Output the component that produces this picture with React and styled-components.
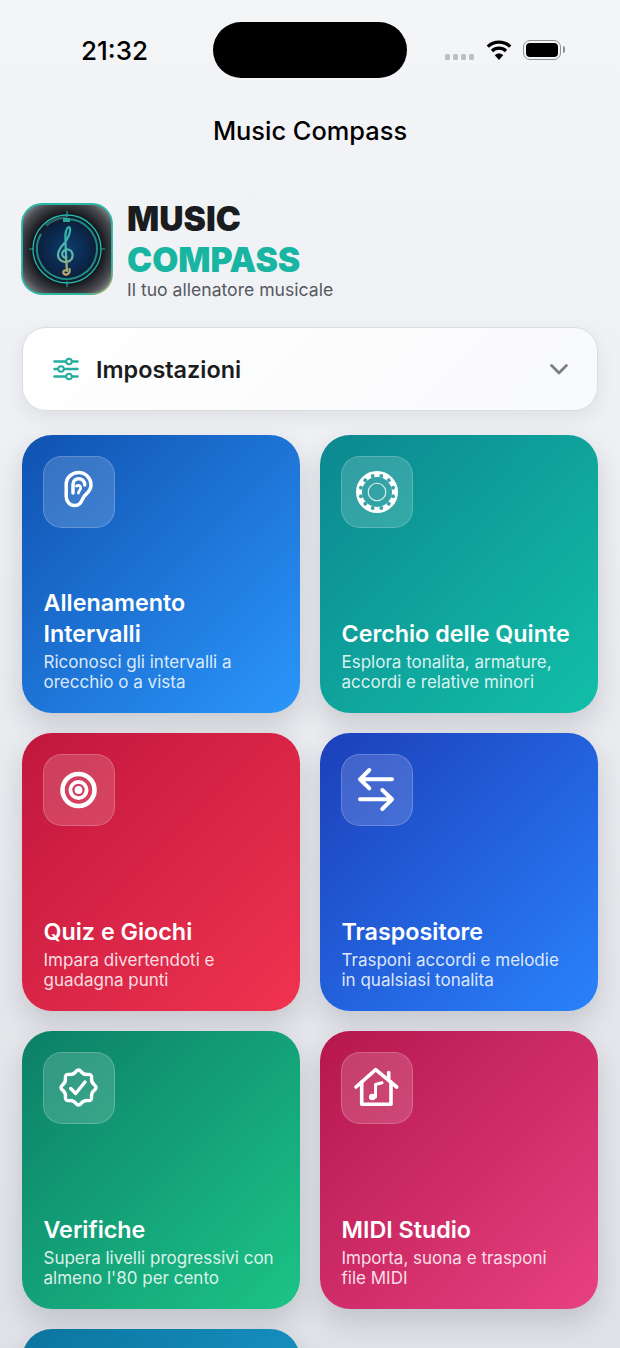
import React from "react";
import styled, { createGlobalStyle } from "styled-components";

const GlobalStyle = createGlobalStyle`
  html, body {
    margin: 0;
    padding: 0;
    height: 1348px;
    overflow: hidden;
  }
  body {
    font-family: Inter, "Liberation Sans", sans-serif;
    -webkit-font-smoothing: antialiased;
  }
`;

//Icons are all drawn on the same 72 grid as their tile
const TileSvg = ({ children }) => (
  <svg
    width="72"
    height="72"
    viewBox="0 0 72 72"
    fill="none"
    stroke="#fff"
    strokeLinecap="round"
    strokeLinejoin="round"
  >
    {children}
  </svg>
);

const EarIcon = () => (
  <TileSvg>
    <g transform="translate(22 15.5)" strokeWidth="3.5">
      <path d="M1.2 13C1.2 6 7 1 13.5 1C20.8 1 26 7 26 13.5C26 19 22.3 21.5 19.8 24C17 26.8 16.8 34 9.5 34C4.8 34 1.2 30 1.2 25Z" />
      <path d="M8 21.5V13.2C8 9.5 10.5 7.2 13.6 7.2C17.2 7.2 19.8 10 19.8 13.5" />
      <path d="M11.5 14.5C13.8 13.2 16.2 14.5 15.6 17C15.2 18.6 13.8 19.2 13.4 21.5" strokeWidth="2.8" />
    </g>
  </TileSvg>
);

const fifthsDots = Array.from({ length: 12 }, (_, i) => {
  const a = ((i * 30 + 15) * Math.PI) / 180;
  return { x: 36 + 16.6 * Math.sin(a), y: 36 - 16.6 * Math.cos(a) };
});

const FifthsIcon = () => (
  <TileSvg>
    <circle cx="36" cy="36" r="18" strokeWidth="6" />
    {fifthsDots.map((d, i) => (
      <circle key={i} cx={d.x} cy={d.y} r="2" fill="#3da4a6" stroke="none" />
    ))}
    <circle cx="36" cy="36" r="8.8" strokeWidth="1.1" opacity="0.85" />
  </TileSvg>
);

const TargetIcon = () => (
  <TileSvg>
    <circle cx="35.5" cy="36" r="16" strokeWidth="4.6" />
    <circle cx="35.5" cy="36" r="8.1" strokeWidth="3.8" />
    <circle cx="35.5" cy="36" r="3.9" fill="#fff" stroke="none" />
  </TileSvg>
);

const SwapIcon = () => (
  <TileSvg>
    <g strokeWidth="4">
      <path d="M51 25.3H19M28.3 16L19 25.3L28.3 34.3" />
      <path d="M19 45.3H51M41.3 36L51 45.3L41.3 55" />
    </g>
  </TileSvg>
);

//Wavy eight point seal, a closed quadratic spline through the star's corners
const sealPoints = Array.from({ length: 16 }, (_, i) => {
  const r = i % 2 === 0 ? 19.2 : 13.6;
  const a = (i * 22.5 * Math.PI) / 180;
  return [35.5 + r * Math.sin(a), 35.5 - r * Math.cos(a)];
});
const sealMid = (p, q) => [(p[0] + q[0]) / 2, (p[1] + q[1]) / 2];
const sealStart = sealMid(sealPoints[15], sealPoints[0]);
const sealPath =
  `M${sealStart[0].toFixed(2)} ${sealStart[1].toFixed(2)}` +
  sealPoints
    .map((p, i) => {
      const m = sealMid(p, sealPoints[(i + 1) % 16]);
      return `Q${p[0].toFixed(2)} ${p[1].toFixed(2)} ${m[0].toFixed(2)} ${m[1].toFixed(2)}`;
    })
    .join("") +
  "Z";

const SealIcon = () => (
  <TileSvg>
    <path d={sealPath} strokeWidth="3.4" />
    <path d="M27.7 36.5L32.7 41.5L42 30" strokeWidth="3.4" />
  </TileSvg>
);

const HouseIcon = () => (
  <TileSvg>
    <g strokeWidth="3.6">
      <path d="M15 35L34.7 17.7L55.7 35" />
      <path d="M20.7 30V52.3H50V30" />
      <path d="M47.7 20.5V27" />
      <path d="M34.5 45V32.5L41 30.8" strokeWidth="3" />
    </g>
    <circle cx="31.3" cy="45" r="3.3" fill="#fff" stroke="none" />
  </TileSvg>
);

const cards = [
  {
    title: "Allenamento Intervalli",
    text: "Riconosci gli intervalli a orecchio o a vista",
    from: "#1052b0",
    to: "#2b96fb",
    Icon: EarIcon,
  },
  {
    title: "Cerchio delle Quinte",
    text: "Esplora tonalita, armature, accordi e relative minori",
    from: "#0c8790",
    to: "#12bfa8",
    Icon: FifthsIcon,
  },
  {
    title: "Quiz e Giochi",
    text: "Impara divertendoti e guadagna punti",
    from: "#c1173d",
    to: "#f03350",
    Icon: TargetIcon,
  },
  {
    title: "Traspositore",
    text: "Trasponi accordi e melodie in qualsiasi tonalita",
    from: "#1c3fba",
    to: "#2a82fc",
    Icon: SwapIcon,
  },
  {
    title: "Verifiche",
    text: "Supera livelli progressivi con almeno l'80 per cento",
    from: "#0c7f68",
    to: "#1cc487",
    Icon: SealIcon,
  },
  {
    title: "MIDI Studio",
    text: "Importa, suona e trasponi file MIDI",
    from: "#b5174c",
    to: "#e84181",
    Icon: HouseIcon,
  },
];

const App = () => {
  return (
    <Page>
      <GlobalStyle />
      <StatusBar>
        <Clock>21:32</Clock>
        <Island />
        <StatusIcons>
          <SignalDots>
            <i />
            <i />
            <i />
            <i />
          </SignalDots>
          <svg width="26" height="22" viewBox="0 0 26 22" fill="none" stroke="#000">
            <path d="M1.8 7.6C8 1.6 18 1.6 24.2 7.6" strokeWidth="3.4" />
            <path d="M6 12C10 8.2 16 8.2 20 12" strokeWidth="3.4" />
            <path d="M13 21L8.8 16.3C11 14 15 14 17.2 16.3Z" fill="#000" stroke="none" />
          </svg>
          <Battery>
            <BatteryFill />
            <BatteryNub />
          </Battery>
        </StatusIcons>
      </StatusBar>

      <NavTitle>Music Compass</NavTitle>

      <Content>
        <Hero>
          <Logo />
          <HeroText>
            <BrandLine>MUSIC</BrandLine>
            <BrandLine $accent>COMPASS</BrandLine>
            <Tagline>Il tuo allenatore musicale</Tagline>
          </HeroText>
        </Hero>

        <Settings>
          <svg width="26" height="24" viewBox="0 0 26 24" fill="none" stroke="#24ad9f" strokeWidth="2.6" strokeLinecap="round">
            <path d="M1.5 4.5H24.5M1.5 12H24.5M1.5 19.5H24.5" />
            <g fill="#fff" strokeWidth="2">
              <circle cx="16" cy="4.5" r="2.8" />
              <circle cx="8" cy="12" r="2.8" />
              <circle cx="16" cy="19.5" r="2.8" />
            </g>
          </svg>
          <SettingsLabel>Impostazioni</SettingsLabel>
          <svg width="18" height="11" viewBox="0 0 18 11" fill="none" stroke="#7d7f85" strokeWidth="2.8" strokeLinecap="round" strokeLinejoin="round">
            <path d="M1.6 1.6L9 9L16.4 1.6" />
          </svg>
        </Settings>

        <Grid>
          {cards.map(({ title, text, from, to, Icon }) => (
            <Card key={title} $from={from} $to={to}>
              <IconTile>
                <Icon />
              </IconTile>
              <div>
                <CardTitle>{title}</CardTitle>
                <CardText>{text}</CardText>
              </div>
            </Card>
          ))}
          <Card $from="#0c749f" $to="#1ea5d8" />
        </Grid>
      </Content>
    </Page>
  );
};

//App logo, drawn as one picture
const Logo = () => (
  <LogoBox>
    <svg width="92" height="92" viewBox="0 0 92 92" fill="none">
      <defs>
        <radialGradient id="logoBg" cx="50%" cy="50%" r="68%">
          <stop offset="0" stopColor="#0d3d70" />
          <stop offset="0.42" stopColor="#0b2343" />
          <stop offset="0.58" stopColor="#17191e" />
          <stop offset="0.78" stopColor="#48494e" />
          <stop offset="1" stopColor="#a3a4a7" />
        </radialGradient>
        <linearGradient id="logoEdge" x1="0" y1="0" x2="1" y2="1">
          <stop offset="0" stopColor="#26b8a8" />
          <stop offset="0.84" stopColor="#2eb5a0" />
          <stop offset="1" stopColor="#c99a45" />
        </linearGradient>
        <linearGradient id="clefInk" x1="0" y1="0" x2="0" y2="1">
          <stop offset="0" stopColor="#23b5ad" />
          <stop offset="0.6" stopColor="#5fb7a5" />
          <stop offset="1" stopColor="#c6a766" />
        </linearGradient>
      </defs>
      <rect x="1" y="1" width="90" height="90" rx="20" fill="url(#logoBg)" stroke="url(#logoEdge)" strokeWidth="1.8" />
      <circle cx="46" cy="46" r="34" stroke="#24b9ad" strokeWidth="1.3" />
      <path d="M46 16A30 30 0 1 1 20 31" stroke="#1f9f98" strokeWidth="2" opacity="0.85" />
      <path d="M46 14.5A31.5 31.5 0 0 0 25 22.5" stroke="#3a7f80" strokeWidth="2.6" opacity="0.7" />
      <path d="M46 8V14M46 78V84M8 46H13M79 46H84" stroke="#27a79d" strokeWidth="1.1" />
      <path d="M42 15H49V19H42Z" fill="#2aa89c" />
      <g stroke="url(#clefInk)" strokeLinecap="round" fill="none">
        <path
          d="M48.5 66C49.5 70 46 72.5 43.5 71.2C41.6 70.2 42 67.2 44.4 67.3M46 68C45.2 58 44.6 44 44.4 33C44.3 27 47.4 22.6 48.6 24.5C50.4 27.5 47.2 36 43 40.5C38.5 45.4 36.2 49 37.2 53.5C38.3 58.5 45 60.5 49.2 57.5C53 54.6 52.2 47.5 47.2 46.5C43.2 45.8 40.3 49 41.5 52.4C42.2 54.2 44 55 45.5 54.6"
          strokeWidth="2.2"
        />
      </g>
    </svg>
  </LogoBox>
);

const Page = styled.div`
  height: 1348px;
  overflow: hidden;
  background: linear-gradient(180deg, #f4f5f7 0%, #eff0f4 30%, #dfe1e6 100%);
`;

const StatusBar = styled.div`
  display: grid;
  grid-template-columns: 213px 194px 1fr;
  align-items: center;
  height: 56px;
  padding-top: 22px;
`;

const Clock = styled.div`
  padding-left: 81px;
  font-size: 26px;
  font-weight: 500;
  line-height: 32px;
  color: #000;
  margin-top: 2px;
`;

const Island = styled.div`
  height: 56px;
  border-radius: 28px;
  background: #000;
`;

const StatusIcons = styled.div`
  display: flex;
  align-items: center;
  padding-left: 38px;
  gap: 12px;
`;

const SignalDots = styled.div`
  display: flex;
  gap: 3px;
  margin-top: 13px;

  i {
    display: block;
    width: 5px;
    height: 6px;
    border-radius: 1.5px;
    background: #bcbec2;
  }
`;

const Battery = styled.div`
  position: relative;
  box-sizing: border-box;
  width: 38px;
  height: 20px;
  padding: 2px;
  margin-left: -1px;
  border: 1.5px solid #8e8f92;
  border-radius: 7px;
`;

const BatteryFill = styled.div`
  height: 100%;
  border-radius: 4px;
  background: #000;
`;

const BatteryNub = styled.div`
  position: absolute;
  top: 5px;
  right: -5px;
  width: 2px;
  height: 7px;
  border-radius: 0 2px 2px 0;
  background: #8e8f92;
`;

const NavTitle = styled.div`
  margin-top: 36px;
  font-size: 25.4px;
  font-weight: 500;
  line-height: 33px;
  text-align: center;
  color: #000;
`;

const Content = styled.div`
  padding: 56px 22px 0;
`;

const Hero = styled.div`
  display: flex;
  align-items: flex-start;
  gap: 14px;
  margin-left: -1px;
`;

const LogoBox = styled.div`
  flex: none;
  width: 92px;
  height: 92px;
  line-height: 0;
`;

const HeroText = styled.div`
  display: flex;
  flex-direction: column;
`;

const BrandLine = styled.div`
  font-size: 33.7px;
  font-weight: 900;
  line-height: 41px;
  margin-top: ${(props) => (props.$accent ? "0" : "-5px")};
  color: ${(props) => (props.$accent ? "#17b5a2" : "#1b1c20")};
`;

const Tagline = styled.div`
  font-size: 17.6px;
  line-height: 20px;
  color: #55585f;
`;

const Settings = styled.div`
  box-sizing: border-box;
  display: flex;
  align-items: center;
  height: 84px;
  margin-top: 27px;
  padding: 0 29px 0 30px;
  background: linear-gradient(135deg, #ffffff, #f8f9fb);
  border: 1px solid #dcdde1;
  border-radius: 24px;
  box-shadow: 0 6px 18px rgba(30, 35, 50, 0.08);
`;

const SettingsLabel = styled.div`
  flex: 1;
  margin-left: 17px;
  font-size: 23.4px;
  font-weight: 600;
  color: #1b1c20;
`;

const Grid = styled.div`
  display: grid;
  grid-template-columns: 278px 278px;
  grid-auto-rows: 278px;
  gap: 20px;
  margin-top: 24px;
`;

const Card = styled.div`
  box-sizing: border-box;
  display: flex;
  flex-direction: column;
  justify-content: space-between;
  padding: 21px 23px 21px 21.5px;
  border-radius: 30px;
  background: linear-gradient(135deg, ${(props) => props.$from}, ${(props) => props.$to});
  box-shadow: 0 12px 26px rgba(30, 35, 50, 0.16);
  color: #fff;
`;

const IconTile = styled.div`
  box-sizing: border-box;
  width: 72px;
  height: 72px;
  margin-left: -0.5px;
  border-radius: 19px;
  background: rgba(255, 255, 255, 0.16);
  box-shadow: inset 0 0 0 1px rgba(255, 255, 255, 0.2);
  line-height: 0;
`;

const CardTitle = styled.div`
  font-size: 23.3px;
  font-weight: 600;
  line-height: 31px;
`;

const CardText = styled.div`
  margin-top: 3px;
  font-size: 17px;
  line-height: 20px;
  color: rgba(255, 255, 255, 0.86);
`;

export default App;
